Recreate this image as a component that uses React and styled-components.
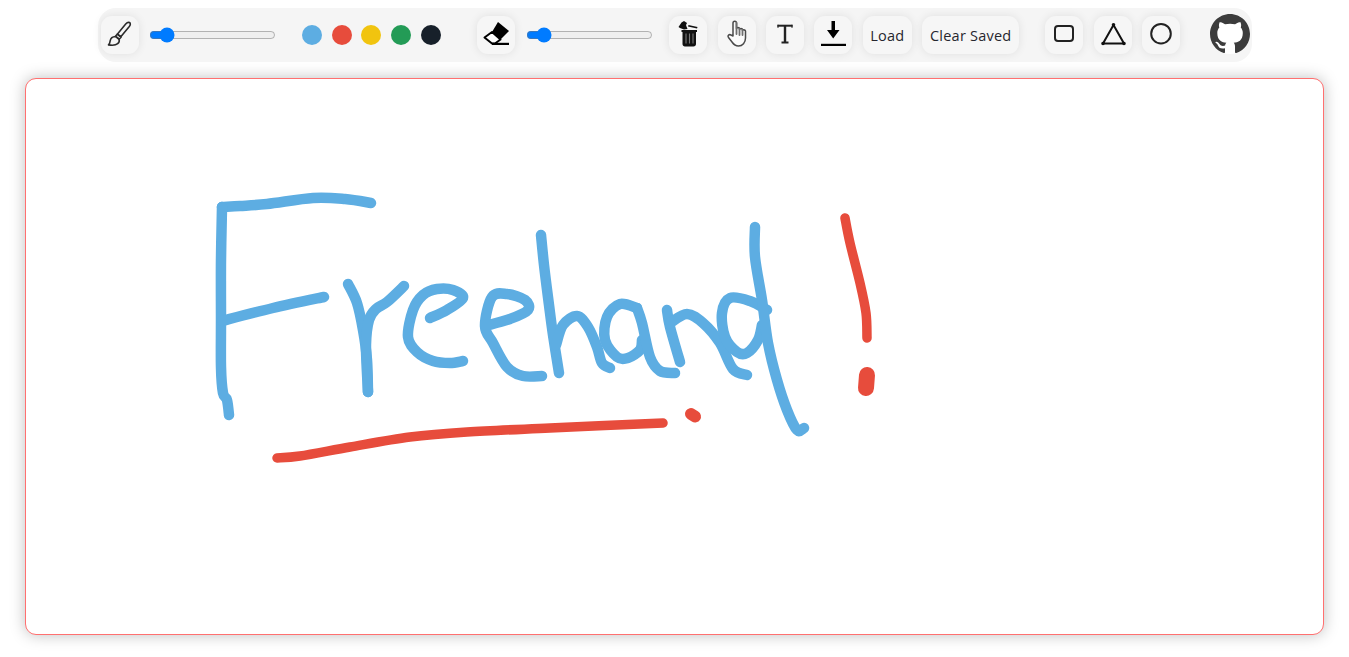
import React from "react";
import styled, { createGlobalStyle } from "styled-components";

const Global = createGlobalStyle`
  html, body { margin: 0; padding: 0; background: #fff; }
  body { font-family: "Open Sans", "Noto Sans", sans-serif; overflow: hidden; }
`;
const Page = styled.div`
  width: 1349px;
  height: 657px;
  padding-top: 8px;
  box-sizing: border-box;
`;
const Toolbar = styled.div`
  width: 1154px;
  height: 54px;
  margin: 0 auto 16px;
  padding-left: 3px;
  box-sizing: border-box;
  display: flex;
  align-items: center;
  background: #f5f5f5;
  border-radius: 18px;
`;
const Group = styled.div`
  display: flex;
  align-items: center;
  gap: ${(p) => p.$gap}px;
  margin-left: ${(p) => p.$left || 0}px;
`;
const ToolButton = styled.button`
  width: ${(p) => p.$w || 38}px;
  height: 38px;
  padding: 0;
  border: 0;
  border-radius: 11px;
  background: #f6f6f6;
  box-shadow: 0 0 10px rgba(0, 0, 0, 0.09);
  display: flex;
  align-items: center;
  justify-content: center;
  font: 400 14.5px "Open Sans", "Noto Sans", sans-serif;
  letter-spacing: 0.22px;
  color: #26262e;
  flex: none;
`;
const Icon = styled.svg`
  width: 38px;
  height: 38px;
  display: block;
`;
const Range = styled.input`
  width: 127px;
  margin: 0;
  accent-color: #007bff;
`;
const Swatch = styled.span`
  width: 20px;
  height: 20px;
  border-radius: 50%;
  background: ${(p) => p.$color};
  flex: none;
`;
const GithubLink = styled.a`
  display: block;
  width: 40px;
  height: 40px;
  margin: 0 0 2px 30px;
  border-radius: 50%;
  background: #fff;
  color: #3c3c3c;
`;
const Board = styled.div`
  width: 1299px;
  height: 557px;
  margin: 0 auto;
  box-sizing: border-box;
  background: #fff;
  border: 1px solid #ff7070;
  border-radius: 11px;
  box-shadow: 0 0 15px rgba(0, 0, 0, 0.25);
  overflow: hidden;
`;
const Drawing = styled.svg`
  display: block;
  width: 100%;
  height: 100%;
`;

const smooth = (pts) => {
  let d = `M${pts[0][0]} ${pts[0][1]}`;
  for (let i = 0; i < pts.length - 1; i++) {
    const p0 = pts[i - 1] || pts[i];
    const p1 = pts[i];
    const p2 = pts[i + 1];
    const p3 = pts[i + 2] || p2;
    const c1 = [p1[0] + (p2[0] - p0[0]) / 6, p1[1] + (p2[1] - p0[1]) / 6];
    const c2 = [p2[0] - (p3[0] - p1[0]) / 6, p2[1] - (p3[1] - p1[1]) / 6];
    d += ` C${c1[0].toFixed(1)} ${c1[1].toFixed(1)} ${c2[0].toFixed(1)} ${c2[1].toFixed(1)} ${p2[0]} ${p2[1]}`;
  }
  return d;
};

const blueStrokes = [
  [[371, 203], [345, 199], [313, 198], [267, 204], [240, 206], [222, 207]],
  [[222, 207], [221, 260], [221, 320], [221, 367], [223, 393], [227, 400], [229, 415]],
  [[324, 297], [273, 308], [222, 321]],
  [[348, 284], [357, 303], [363, 330], [367, 360], [368, 392]],
  [[368, 392], [366, 345], [369, 320], [376, 309], [387, 302], [404, 286]],
  [[430, 318], [447, 310], [463, 298], [453, 290], [437, 289], [423, 295], [413, 310], [408, 337], [417, 352], [433, 361], [450, 363], [463, 361]],
  [[485, 326], [510, 319], [528, 310], [525, 300], [507, 294], [492, 297], [485, 326], [493, 343], [507, 367], [523, 376], [542, 376]],
  [[541, 235], [544, 265], [549, 305], [553, 335], [559, 373]],
  [[556, 345], [563, 325], [577, 316], [588, 327], [597, 347], [602, 363], [610, 368]],
  [[637, 308], [620, 304], [607, 317], [605, 340], [617, 357], [628, 358], [640, 350], [642, 340]],
  [[637, 308], [642, 323], [650, 357], [660, 371], [675, 373]],
  [[667, 310], [670, 327], [680, 362]],
  [[670, 323], [687, 314], [703, 323], [720, 343], [733, 369], [747, 375]],
  [[767, 310], [750, 301], [730, 298], [722, 313], [725, 337], [737, 352], [747, 353], [758, 340], [762, 325]],
  [[755, 227], [755, 257], [762, 300], [768, 343], [777, 380], [787, 410], [797, 430], [804, 428]],
];
const redStrokes = [
  [[277, 458], [300, 456], [350, 447], [410, 437], [467, 432], [550, 428], [663, 423]],
  [[845, 218], [850, 243], [860, 283], [866, 313], [867, 338]],
];

const BrushIcon = () => (
  <Icon viewBox="0 0 38 38" fill="none" stroke="#2b2b2b" strokeWidth="1.600" strokeLinejoin="round">
    <path d="M28.500 6.500c-1.500-.5-2.800.4-3.800 1.600l-8.200 9.900 3.300 2.700 8.500-10.200c1-1.300 1.600-3.200.2-4z" />
    <path d="M16.200 18.200l3.800 3-1.800 2-3.700-3z" />
    <path d="M14.500 20.500c-3 .3-4.800 1.600-5.200 3.800-.3 2-.8 3.600-1.800 4.600 2.800.5 7.200.5 9.200-1.200 1.500-1.300 1.800-3 1.400-4.300z" />
  </Icon>
);
const EraserIcon = () => (
  <Icon viewBox="0 0 38 38">
    <path d="M21 6 32 15 23.500 23.500 15 16z" fill="#000" />
    <path d="M15 16 23.500 23.500 18 27.500H15L7.500 21.500z" fill="#fff" stroke="#000" strokeWidth="2" strokeLinejoin="round" />
    <rect x="15" y="26.800" width="17" height="2.200" fill="#000" />
  </Icon>
);
const TrashIcon = () => (
  <Icon viewBox="0 0 38 38" fill="#111">
    <path d="M12.500 14h15.500v2h-1v12c0 1.500-1 2.500-2.500 2.500h-8.500c-1.500 0-2.500-1-2.500-2.500V16h-1z" />
    <path d="M17 17.500v10M20.500 17.500v10M24 17.500v10" stroke="#777" strokeWidth="1.100" />
    <path d="M9.500 11l3-4.500 2.500-1.500 3 2-1 2 .5 1.500 1 2.500-3.500.5-4-1.500z" />
    <path d="M19.500 9 28.500 11 28 12.500 19 10.500z" />
  </Icon>
);
const HandIcon = () => (
  <Icon viewBox="0 0 38 38" fill="none" stroke="#4a4a4a" strokeWidth="1.500" strokeLinejoin="round" strokeLinecap="round">
    <path d="M15 20V7c0-2.400 3.500-2.400 3.500 0v5.500c0-1.200 3-1.200 3 0v1c0-1.200 3-1.200 3 0v1c0-1.200 3-1 3 .5v7c0 4.500-3 8-7 8-3.500 0-5-1.800-6.500-4l-3.500-4.500c-1.500-2 .8-3.500 2.500-2.500z" fill="#fbfbfb" />
    <path d="M18.500 7v11M21.500 13v6M24.500 14v5" stroke="#6f6f6f" strokeWidth="1.800" />
  </Icon>
);
const TextIcon = () => (
  <Icon viewBox="0 0 38 38" fill="none" stroke="#222" strokeWidth="2">
    <path d="M11.500 9.700H26.500" />
    <path d="M12 8.700v3M26 8.700v3" strokeWidth="1.200" />
    <path d="M19 9.700v17" strokeWidth="2.400" />
    <path d="M15.500 26.500h7" />
  </Icon>
);
const DownloadIcon = () => (
  <Icon viewBox="0 0 38 38" fill="#000">
    <path d="M17.500 5h3.500v9h4.500L19.200 22.500 13 14h4.500z" />
    <rect x="7" y="27.800" width="25" height="2.200" />
  </Icon>
);
const RectIcon = () => (
  <Icon viewBox="0 0 38 38" fill="none" stroke="#222" strokeWidth="2">
    <rect x="10" y="10" width="18" height="15" rx="3" />
  </Icon>
);
const TriangleIcon = () => (
  <Icon viewBox="0 0 38 38" fill="#111" stroke="#111" strokeWidth="2" strokeLinejoin="round">
    <path d="M19.500 9 30 27.500H9z" fill="none" />
    <circle cx="19.500" cy="8.800" r=".8" />
    <circle cx="9" cy="27.500" r=".8" />
    <circle cx="30" cy="27.500" r=".8" />
  </Icon>
);
const CircleIcon = () => (
  <Icon viewBox="0 0 38 38" fill="none" stroke="#222" strokeWidth="2">
    <circle cx="19" cy="17.700" r="9.800" />
  </Icon>
);
const GithubIcon = () => (
  <svg viewBox="0 0 16 16" width="40" height="40" fill="currentColor">
    <path d="M8 0C3.580 0 0 3.580 0 8c0 3.540 2.290 6.530 5.470 7.590.4.070.55-.170.55-.380 0-.190-.010-.820-.010-1.490-2.010.370-2.530-.490-2.690-.940-.090-.230-.480-.940-.820-1.130-.280-.150-.680-.520-.010-.530.630-.010 1.080.580 1.230.820.720 1.210 1.870.870 2.330.660.070-.520.280-.870.510-1.070-1.780-.200-3.640-.890-3.640-3.950 0-.870.310-1.590.820-2.150-.080-.200-.360-1.020.080-2.120 0 0 .670-.210 2.200.820.640-.180 1.320-.270 2-.270s1.360.090 2 .270c1.530-1.040 2.200-.820 2.200-.820.440 1.100.160 1.920.080 2.120.510.560.820 1.270.820 2.150 0 3.070-1.870 3.750-3.650 3.950.290.250.540.730.540 1.480 0 1.070-.010 1.930-.010 2.200 0 .210.150.460.550.380A8.010 8.010 0 0 0 16 8c0-4.420-3.580-8-8-8z" />
  </svg>
);

const COLORS = ["#5dade2", "#e74c3c", "#f1c40f", "#239b56", "#17202a"];

export default function App() {
  return (
    <Page>
      <Global />
      <Toolbar>
        <Group $gap={10.5}>
          <ToolButton aria-label="Brush"><BrushIcon /></ToolButton>
          <Range type="range" min="1" max="100" defaultValue="10" />
        </Group>
        <Group $gap={9.7} $left={26}>
          {COLORS.map((c) => <Swatch key={c} $color={c} />)}
        </Group>
        <Group $gap={10.5} $left={36.5}>
          <ToolButton aria-label="Eraser"><EraserIcon /></ToolButton>
          <Range type="range" min="1" max="100" defaultValue="10" />
        </Group>
        <Group $gap={10.4} $left={16.5}>
          <ToolButton aria-label="Clear"><TrashIcon /></ToolButton>
          <ToolButton aria-label="Pan"><HandIcon /></ToolButton>
          <ToolButton aria-label="Text"><TextIcon /></ToolButton>
          <ToolButton aria-label="Save"><DownloadIcon /></ToolButton>
          <ToolButton $w={49}>Load</ToolButton>
          <ToolButton $w={97}>Clear Saved</ToolButton>
        </Group>
        <Group $gap={10.4} $left={26}>
          <ToolButton aria-label="Rectangle"><RectIcon /></ToolButton>
          <ToolButton aria-label="Triangle"><TriangleIcon /></ToolButton>
          <ToolButton aria-label="Circle"><CircleIcon /></ToolButton>
        </Group>
        <GithubLink href="#" aria-label="GitHub"><GithubIcon /></GithubLink>
      </Toolbar>
      <Board>
        <Drawing viewBox="26 79 1297 555" preserveAspectRatio="none">
          <g fill="none" stroke="#5dade2" strokeWidth="10.500" strokeLinecap="round" strokeLinejoin="round">
            {blueStrokes.map((s, i) => <path key={i} d={smooth(s)} />)}
          </g>
          <g fill="none" stroke="#e74c3c" strokeWidth="9.500" strokeLinecap="round" strokeLinejoin="round">
            {redStrokes.map((s, i) => <path key={i} d={smooth(s)} />)}
            <path d="M691 414 L695 416.500" strokeWidth="12" />
            <path d="M867 375 L866 388" strokeWidth="16" />
          </g>
        </Drawing>
      </Board>
    </Page>
  );
}
